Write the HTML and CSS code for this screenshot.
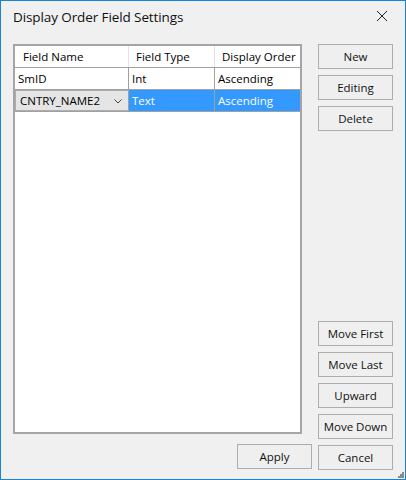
FILE: index.html
```html
<!DOCTYPE html>
<html>
<head>
<meta charset="utf-8">
<link rel="stylesheet" href="styles.css">
</head>
<body>
<div class="window">
  <div class="titlebar">
    <span class="title">Display Order Field Settings</span>
    <svg class="close" width="12" height="12" viewBox="0 0 12 12"><path d="M1 1 L11 11 M11 1 L1 11" stroke="#222" stroke-width="1" fill="none"/></svg>
  </div>
  <div class="content">
    <div class="left">
      <div class="grid">
        <div class="row head">
          <div class="cell h1">Field Name</div>
          <div class="cell">Field Type</div>
          <div class="cell">Display Order</div>
        </div>
        <div class="row">
          <div class="cell">SmID</div>
          <div class="cell">Int</div>
          <div class="cell">Ascending</div>
        </div>
        <div class="row sel">
          <div class="cell combo"><span>CNTRY_NAME2</span>
            <svg width="8" height="5" viewBox="0 0 8 5"><path d="M0.5 0.5 L4 4 L7.5 0.5" stroke="#444" stroke-width="1" fill="none"/></svg>
          </div>
          <div class="cell hl">Text</div>
          <div class="cell hl">Ascending</div>
        </div>
      </div>
      <div class="footer">
        <button class="btn">Apply</button>
      </div>
    </div>
    <div class="right">
      <div class="group">
        <button class="btn">New</button>
        <button class="btn">Editing</button>
        <button class="btn">Delete</button>
      </div>
      <div class="group bottom">
        <button class="btn">Move First</button>
        <button class="btn">Move Last</button>
        <button class="btn">Upward</button>
        <button class="btn">Move Down</button>
        <button class="btn">Cancel</button>
      </div>
    </div>
  </div>
  <div class="grip">
    <svg width="6" height="6" viewBox="0 0 6 6"><g fill="#8a8a8a"><rect x="4" y="0" width="2" height="2"/><rect x="2" y="2" width="2" height="2"/><rect x="4" y="2" width="2" height="2"/><rect x="0" y="4" width="2" height="2"/><rect x="2" y="4" width="2" height="2"/><rect x="4" y="4" width="2" height="2"/></g></svg>
  </div>
</div>
</body>
</html>
```

FILE: styles.css
```css
* { box-sizing: border-box; }
html, body { margin: 0; padding: 0; }
body {
  width: 406px;
  height: 480px;
  overflow: hidden;
  font-family: "Open Sans", "Noto Sans", sans-serif;
  font-size: 11.5px;
  color: #000;
}
.window {
  position: relative;
  width: 406px;
  height: 480px;
  background: #f0f0f0;
  border: 1px solid #1883d7;
  display: flex;
  flex-direction: column;
}
.titlebar {
  height: 31px;
  display: flex;
  align-items: center;
  justify-content: space-between;
  padding: 0 17px 0 12px;
}
.title {
  font-size: 13.5px;
  color: #111;
  letter-spacing: -0.1px;
}
.close { margin-top: -1px; }
.content {
  display: flex;
  padding: 12px 12px 0 12px;
  gap: 6px;
}
.left {
  width: 299px;
  display: flex;
  flex-direction: column;
}
.grid {
  width: 289px;
  height: 390px;
  background: #fff;
  border: 2px solid #a5a5a5;
}
.row {
  display: grid;
  grid-template-columns: 114px 86px 1fr;
  height: 22px;
  border-bottom: 1px solid #a0a0a0;
}
.row.head { height: 22px; }
.cell {
  border-right: 1px solid #a0a0a0;
  padding-left: 3px;
  line-height: 21px;
  white-space: nowrap;
  overflow: hidden;
}
.cell:last-child { border-right: none; }
.head .cell {
  padding-left: 7px;
  border-right-color: #e3e3e3;
}
.head .h1 { padding-left: 8px; }
.hl {
  background: #3399ff;
  color: #fff;
}
.combo {
  background: #e5e5e5;
  border: 1px solid #adadad;
  border-right-color: #a0a0a0;
  display: flex;
  align-items: center;
  justify-content: space-between;
  padding: 0 6px 0 4px;
  line-height: 20px;
}
.combo svg { margin-top: 1px; }
.footer {
  display: flex;
  justify-content: flex-end;
  margin-top: 10px;
}
.right {
  width: 75px;
  height: 426px;
  display: flex;
  flex-direction: column;
  justify-content: space-between;
}
.group {
  display: flex;
  flex-direction: column;
  gap: 6px;
}
.group.bottom { gap: 6px; }
.btn {
  width: 75px;
  height: 25px;
  background: #efefef;
  border: 1px solid #adadad;
  font-family: inherit;
  font-size: 11.5px;
  line-height: 23px;
  color: #111;
  padding: 0;
  margin: 0;
}
.grip {
  position: absolute;
  right: 1px;
  bottom: 1px;
  line-height: 0;
}
```
